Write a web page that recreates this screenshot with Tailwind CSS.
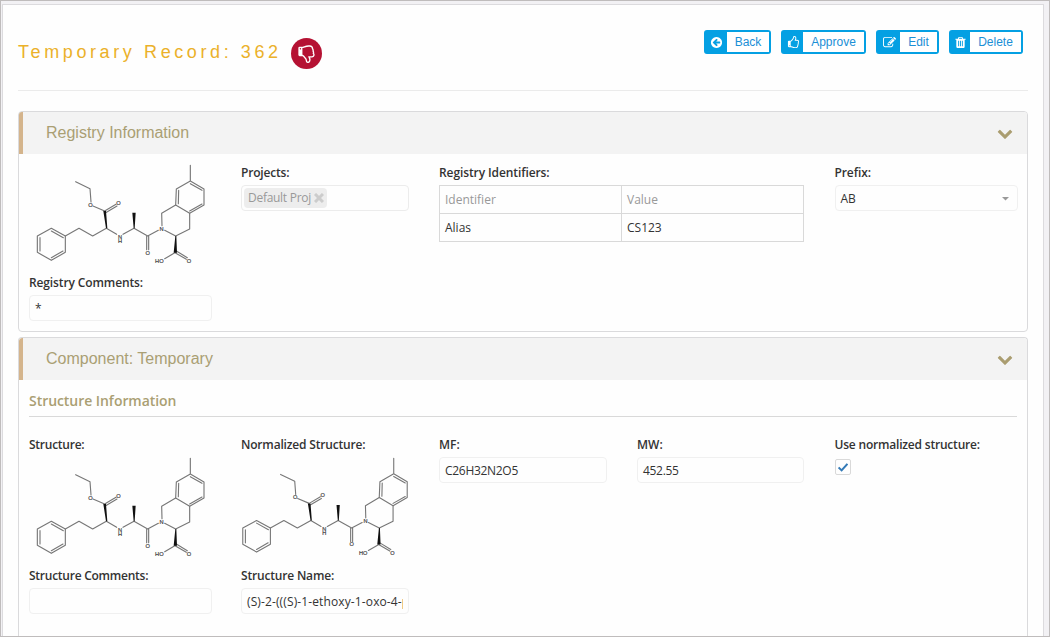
<!DOCTYPE html>
<html lang="en">
<head>
<meta charset="utf-8">
<title>Temporary Record: 362</title>
<script src="https://cdn.jsdelivr.net/npm/@tailwindcss/browser@4"></script>
</head>
<body class="flex h-[637px] flex-col overflow-hidden border border-[#bfbcbc] bg-[#f2f1f4] font-['Open_Sans','Noto_Sans',sans-serif] text-xs text-[#333]">
<svg class="hidden">
  <symbol id="thumb" viewBox="0 0 1792 1792"><path d="M384 1344q0-26-19-45t-45-19-45 19-19 45 19 45 45 19 45-19 19-45zm1152-576q0-51-39-89.5t-89-38.5h-352q0-58 48-159.5t48-160.5q0-98-32-145t-128-47q-26 26-38 85t-30.5 125.5-59.5 109.5q-22 23-77 91-4 5-23 30t-31.5 41-34.5 42.5-40 44-38.5 35.5-40 27-35.5 9h-32v640h32q13 0 31.5 3t33 6.5 38 11 35 11.5 35.5 12.5 29 10.5q211 73 342 73h121q192 0 192-167 0-26-5-56 30-16 47.5-52.5t17.5-73.5-18-69q53-50 53-119 0-25-10-55.5t-25-47.5q32-1 53.5-47t21.5-81zm128-1q0 89-49 163 9 33 9 69 0 77-38 144 3 21 3 43 0 101-60 178 1 139-85 219.5t-227 80.5h-129q-96 0-189.5-22.5t-216.5-65.5q-116-40-138-40h-288q-53 0-90.5-37.5t-37.5-90.5v-640q0-53 37.5-90.5t90.5-37.5h274q36-24 137-155 58-75 107-128 24-25 35.5-85.5t30.5-126.5 62-108q39-37 90-37 84 0 151 32.5t102 101.5 35 186q0 93-48 192h176q104 0 180 76t76 179z"/></symbol>
  <symbol id="chev" viewBox="0 0 1792 1792"><path d="M1683 808l-742 741q-19 19-45 19t-45-19l-742-741q-19-19-19-45.5t19-45.5l166-165q19-19 45-19t45 19l531 531 531-531q19-19 45-19t45 19l166 165q19 19 19 45.5t-19 45.5z"/></symbol>
  <symbol id="mol" viewBox="0 0 600 360">
    <g fill="none" stroke="#777" stroke-width="3.4" stroke-linejoin="round" stroke-linecap="round">
      <path d="M94 220L136 243V292L94 316L52 292V243ZM94 228L130 248M129 288L94 308M60 288V248"/>
      <path d="M136 243L177 220L218 243L259 220L290 238M167 80L210 101L213 141M219 153L254 168M254 168L288 148M257 173L291 153"/>
      <path d="M309 238L342 220L383 243L415 226M380 243V284M386 243V284M426 212L425 175L467 150L509 175V222L467 243L434 226"/>
      <path d="M467 150L469 102L511 78L552 102V150L509 175M475 146L476 106M511 86L546 106M546 147L509 168M511 78V31M467 292L434 311M465 293L499 313M469 288L502 308"/>
    </g>
    <g fill="#111"><path d="M250 168H258L262 220H258ZM337 173H347L344 220H341ZM466 243H469L471 293H461Z"/></g>
    <g fill="#444" stroke="#444" stroke-width=".6" font-family="Liberation Sans" font-size="17" text-anchor="middle"><text x="211" y="155">O</text><text x="295" y="150">O</text><text x="300" y="251">N</text><text x="300" y="265">H</text><text x="383" y="299">O</text><text x="425" y="227">N</text><text x="418" y="324">HO</text><text x="507" y="324">O</text></g>
  </symbol>
</svg>
<div class="mt-[3px] ml-px flex min-h-0 w-[1042px] flex-1 flex-col overflow-hidden border border-b-0 border-[#dcdbde] bg-[#fefefe] pt-[25px] pl-[15px]">
  <header class="flex h-[61px] w-[1010px] shrink-0 items-start border-b border-[#ebebeb]">
    <h1 class="mt-2.5 w-[273px] font-['Liberation_Sans',sans-serif] text-[18px] leading-6 tracking-[3.6px] whitespace-nowrap text-[#ebb12a]">Temporary Record: 362</h1>
    <span class="mt-2 flex size-[31px] items-center justify-center rounded-full bg-[#b51233]"><svg class="size-[19px] -scale-y-100 fill-white"><use href="#thumb"/></svg></span>
    <div class="ml-auto flex gap-2.5 pr-[5px] font-['Liberation_Sans',sans-serif] text-xs text-[#1b8fd6]">
      <button class="flex h-6 w-[67px] rounded-[3px] border-2 border-[#04a0e3] bg-[#04a0e3]"><span class="flex h-5 w-[21px] items-center justify-center"><svg viewBox="0 0 1792 1792" class="size-[13px] fill-white"><path d="M1408 960v-128q0-26-19-45t-45-19h-502l189-189q19-19 19-45t-19-45l-91-91q-18-18-45-18t-45 18l-362 362-91 91q-18 18-18 45t18 45l91 91 362 362q18 18 45 18t45-18l91-91q18-18 18-45t-18-45l-189-189h502q26 0 45-19t19-45zm256-64q0 209-103 385.5t-279.5 279.5-385.5 103-385.5-103-279.5-279.5-103-385.5 103-385.5 279.5-279.5 385.5-103 385.5 103 279.5 279.5 103 385.5z"/></svg></span><span class="h-5 flex-1 bg-white text-center leading-5">Back</span></button>
      <button class="flex h-6 w-[85px] rounded-[3px] border-2 border-[#04a0e3] bg-[#04a0e3]"><span class="flex h-5 w-5 items-center justify-center"><svg class="size-[13px] fill-white"><use href="#thumb"/></svg></span><span class="h-5 flex-1 bg-white text-center leading-5">Approve</span></button>
      <button class="flex h-6 w-[63px] rounded-[3px] border-2 border-[#04a0e3] bg-[#04a0e3]"><span class="flex h-5 w-[22px] items-center justify-center"><svg viewBox="0 0 1792 1792" class="size-[13px] fill-white"><path d="M888 1184l116-116-152-152-116 116v56h96v96h56zm440-720q-16-16-33 1l-350 350q-17 17-1 33t33-1l350-350q17-17 1-33zm80 594v190q0 119-84.5 203.5t-203.5 84.5h-832q-119 0-203.5-84.5t-84.5-203.5v-832q0-119 84.5-203.5t203.5-84.5h832q63 0 117 25 15 7 18 23 3 17-9 29l-49 49q-14 14-32 8-23-6-45-6h-832q-66 0-113 47t-47 113v832q0 66 47 113t113 47h832q66 0 113-47t47-113v-126q0-13 9-22l64-64q15-15 35-7t20 29zm-96-738l288 288-672 672h-288v-288zm444 132l-92 92-288-288 92-92q28-28 68-28t68 28l152 152q28 28 28 68t-28 68z"/></svg></span><span class="h-5 flex-1 bg-white text-center leading-5">Edit</span></button>
      <button class="flex h-6 w-[74px] rounded-[3px] border-2 border-[#04a0e3] bg-[#04a0e3]"><span class="flex h-5 w-[19px] items-center justify-center"><svg viewBox="0 0 1792 1792" class="size-[13px] fill-white"><path d="M704 1376v-704q0-14-9-23t-23-9h-64q-14 0-23 9t-9 23v704q0 14 9 23t23 9h64q14 0 23-9t9-23zm256 0v-704q0-14-9-23t-23-9h-64q-14 0-23 9t-9 23v704q0 14 9 23t23 9h64q14 0 23-9t9-23zm256 0v-704q0-14-9-23t-23-9h-64q-14 0-23 9t-9 23v704q0 14 9 23t23 9h64q14 0 23-9t9-23zm-544-992h448l-48-117q-7-9-17-11h-317q-10 2-17 11zm928 32v64q0 14-9 23t-23 9h-96v948q0 83-47 143.5t-113 60.5h-832q-66 0-113-58.5t-47-141.5v-952h-96q-14 0-23-9t-9-23v-64q0-14 9-23t23-9h309l70-167q15-37 54-63t79-26h320q40 0 79 26t54 63l70 167h309q14 0 23 9t9 23z"/></svg></span><span class="h-5 flex-1 bg-white text-center leading-5">Delete</span></button>
    </div>
  </header>

  <section class="mt-5 h-[221px] w-[1010px] shrink-0 rounded border border-[#dadadc]">
    <div class="flex h-[42px] items-center justify-between rounded-t-[3px] border-l-4 border-[#d4b48c] bg-[#f3f3f3] pr-3.5 pl-[23px] font-['Liberation_Sans',sans-serif] text-base text-[#aa9f73]"><h2>Registry Information</h2><svg class="-mt-px size-4 fill-[#aa9d70]"><use href="#chev"/></svg></div>
    <div class="grid grid-cols-[212px_198px_395.5px_183px] pt-[10px] pl-2.5">
      <div>
        <svg class="-mt-[9px] -ml-[9px] h-[120px] w-[200px]"><use href="#mol"/></svg>
        <div class="-mt-px leading-[18px] font-semibold tracking-[-0.12px]">Registry Comments:</div>
        <div class="mt-[3px] h-[26px] w-[183px] rounded border border-[#f0f0f0] px-[5px] leading-[26px]">*</div>
      </div>
      <div>
        <div class="leading-[18px] font-semibold tracking-[-0.18px]">Projects:</div>
        <div class="mt-[3px] h-[26px] w-[168px] rounded border border-[#ececec] p-0.5"><span class="flex h-5 w-[83px] items-center gap-[3px] rounded-sm bg-[#ededed] pl-1 leading-[22px] tracking-[-0.28px] whitespace-nowrap text-[#999]">Default Proj<svg viewBox="0 0 10 10" class="size-2.5 shrink-0 stroke-[#ccc] stroke-[3]"><path d="M1 1L9 9M9 1L1 9"/></svg></span></div>
      </div>
      <div>
        <div class="leading-[18px] font-semibold tracking-[-0.1px]">Registry Identifiers:</div>
        <div class="mt-[3px] grid h-[57px] w-[365px] grid-cols-[182px_181px] grid-rows-[28px_27px] border border-[#d9d9d9] *:px-[5px] *:leading-7">
          <div class="border-r border-b border-[#d9d9d9] text-[#999]">Identifier</div><div class="border-b border-[#d9d9d9] text-[#999]">Value</div>
          <div class="border-r border-[#d9d9d9]">Alias</div><div>CS123</div>
        </div>
      </div>
      <div>
        <div class="leading-[18px] font-semibold tracking-[-0.1px]">Prefix:</div>
        <div class="mt-[3px] flex h-[26px] w-[183px] items-center justify-between rounded border border-[#f0f0f0] pt-px pr-2 pl-[5px]">AB<svg viewBox="0 0 7 4" class="h-1 w-[7px] fill-[#999]"><path d="M0 0H7L3.5 3.5Z"/></svg></div>
      </div>
    </div>
  </section>

  <section class="mt-[5px] min-h-0 w-[1010px] flex-1 overflow-hidden rounded-t border border-b-0 border-[#dadadc]">
    <div class="flex h-[42px] items-center justify-between rounded-t-[3px] border-l-4 border-[#d4b48c] bg-[#f3f3f3] pr-3.5 pl-[23px] font-['Liberation_Sans',sans-serif] text-base text-[#aa9f73]"><h2>Component: Temporary</h2><svg class="-mt-px size-4 fill-[#aa9d70]"><use href="#chev"/></svg></div>
    <div class="px-2.5 pt-2.5">
      <h3 class="h-[27px] w-[988px] border-b border-[#d9d9d9] text-sm leading-[22px] font-semibold tracking-[-0.05px] text-[#aa9f73]">Structure Information</h3>
      <div class="mt-[19px] grid grid-cols-[212px_198px_198px_197.5px_183px] *:whitespace-nowrap">
        <div>
          <div class="leading-[18px] font-semibold tracking-[-0.25px]">Structure:</div>
          <svg class="-mt-[6px] -ml-[9px] h-[120px] w-[200px]"><use href="#mol"/></svg>
          <div class="-mt-px leading-[18px] font-semibold tracking-[-0.25px]">Structure Comments:</div>
          <div class="mt-[3px] h-[26px] w-[183px] rounded border border-[#f0f0f0]"></div>
        </div>
        <div>
          <div class="leading-[18px] font-semibold tracking-[-0.18px]">Normalized Structure:</div>
          <svg viewBox="0 0 600 360" class="-mt-[6px] -ml-[20px] h-[120px] w-[200px]"><use href="#mol" width="592" height="356" x="14"/></svg>
          <div class="-mt-px leading-[18px] font-semibold tracking-[-0.18px]">Structure Name:</div>
          <div class="mt-[3px] h-[26px] w-[168px] rounded border border-[#f0f0f0] px-[5px] leading-[26px]"><div class="h-6 overflow-hidden tracking-[0.12px]">(S)-2-(((S)-1-ethoxy-1-oxo-4-phenylbutan</div></div>
        </div>
        <div>
          <div class="leading-[18px] font-semibold">MF:</div>
          <div class="mt-[3px] h-[26px] w-[168px] rounded border border-[#f0f0f0] px-[5px] leading-[26px] tracking-[-0.3px]">C26H32N2O5</div>
        </div>
        <div>
          <div class="leading-[18px] font-semibold">MW:</div>
          <div class="mt-[3px] h-[26px] w-[167px] rounded border border-[#f0f0f0] px-[5px] leading-[26px] tracking-[-0.3px]">452.55</div>
        </div>
        <div>
          <div class="leading-[18px] font-semibold tracking-[-0.2px]">Use normalized structure:</div>
          <div class="mt-[5px] flex size-4 items-center justify-center rounded-[2px] border border-[#d9d9d9]"><svg viewBox="0 0 10 9" class="h-[9px] w-2.5 fill-none stroke-[#337ab7] stroke-2"><path d="M.6 4.5L3.6 7.4L9.4 .8"/></svg></div>
        </div>
      </div>
    </div>
  </section>
</div>
</body>
</html>
